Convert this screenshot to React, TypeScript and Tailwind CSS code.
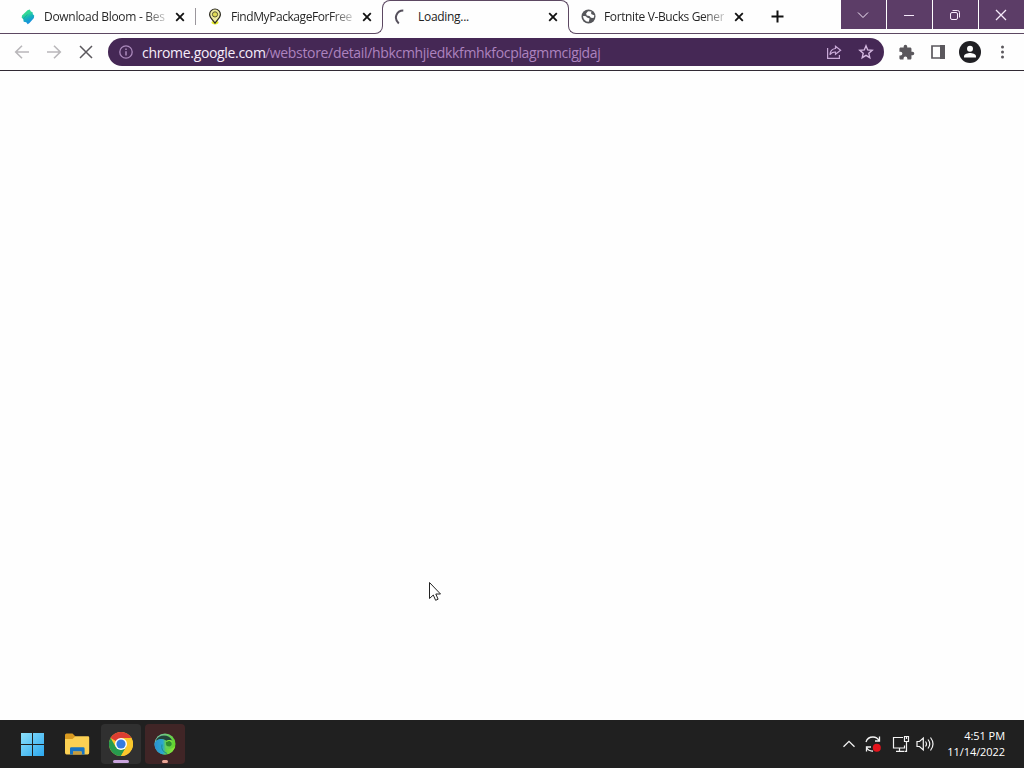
import type { ReactNode } from "react";

const UI_FONT = "font-['Open_Sans','Noto_Sans',sans-serif]";

function CloseIcon() {
  return (
    <svg width="10" height="10" viewBox="0 0 10 10" className="shrink-0" stroke="#111" strokeWidth="1.8" fill="none">
      <path d="M1.2 1.2 8.8 8.8M8.8 1.2 1.2 8.8" />
    </svg>
  );
}

function BloomIcon() {
  return (
    <svg width="14" height="16" viewBox="0 0 14 16">
      <defs>
        <linearGradient id="bloom" x1="0.1" y1="0" x2="0.5" y2="1">
          <stop offset="0.35" stopColor="#32d896" />
          <stop offset="0.6" stopColor="#16b4b8" />
          <stop offset="0.9" stopColor="#1792dc" />
        </linearGradient>
      </defs>
      <path d="M6.5 1.3 8.7.5 9.9 2.5 11.6 3.2 11.8 5.3 13.2 6.5 12.9 8.9 8.5 14 6.7 15.2 5.2 13.2 2.7 12.7 2.2 10 .7 8.7 1 6.5z" fill="url(#bloom)" />
      <path d="M2.2 10 6.5 5.5" stroke="#0f9c9c" strokeWidth="0.5" />
    </svg>
  );
}

function PinIcon() {
  return (
    <svg width="14" height="18" viewBox="0 0 14 18" fill="none">
      <ellipse cx="7" cy="14.6" rx="3.5" ry="1.8" fill="#e8ee2c" />
      <path d="M7 15.2C4.8 11.8 1.6 9.7 1.6 6.4a5.4 5.4 0 0 1 10.8 0c0 3.300-3.200 5.400-5.400 8.800z" fill="#eeeca0" stroke="#2b2a22" strokeWidth="1.2" />
      <circle cx="7" cy="6.4" r="2.6" fill="#e0dc53" stroke="#5b5838" strokeWidth="1" />
    </svg>
  );
}

function GlobeIcon() {
  return (
    <svg width="15" height="15" viewBox="0 0 15 15">
      <circle cx="7.5" cy="7.5" r="7" fill="#55565a" />
      <path d="M7 2.300 10.500 2.600Q9.500 4.300 10.500 5.300L13.300 6.200Q13.200 8.200 12.400 9L9.900 8.700 8.500 6.900 5.700 6.600 5.100 4.600zM1.900 7.200Q5 6.800 6 8.400L8.600 9.500 7.800 12.800Q3 12.500 1.900 7.200z" fill="#fff" />
    </svg>
  );
}

function Spinner() {
  return (
    <svg width="16" height="16" viewBox="0 0 16 16" fill="none" stroke="#55505c" strokeWidth="2">
      <path d="M9.3 1.5C2.500 1.500-.8 9.500 4.800 14.500" />
    </svg>
  );
}

type TabProps = {
  icon: ReactNode;
  title: string;
  className?: string;
  titleClass: string;
  closeClass?: string;
};

function Tab({ icon, title, className = "", titleClass, closeClass = "ml-2" }: TabProps) {
  return (
    <div className={`flex h-[33px] shrink-0 items-center ${className}`}>
      <span className="flex w-4 shrink-0 justify-center">{icon}</span>
      <span className="ml-2 w-[122px] shrink-0 pt-px text-[12px] leading-[18px] whitespace-nowrap text-[#222]">
        <span className={`inline-block ${titleClass}`}>{title}</span>
      </span>
      <span className={`flex ${closeClass}`}><CloseIcon /></span>
    </div>
  );
}

function CaptionButton({ children, label }: { children: ReactNode; label: string }) {
  return (
    <button aria-label={label} className="flex h-[29px] w-[45px] items-center justify-center bg-[#5c3d67] pr-[2px]">
      <svg width="14" height="14" viewBox="0 0 14 14" fill="none" stroke="#f6eafa" strokeWidth="1">
        {children}
      </svg>
    </button>
  );
}

function TabStrip() {
  const fade = "bg-linear-to-r from-[#222] from-82% to-[#c8c8c8] bg-clip-text text-transparent";
  return (
    <div className="flex h-[34px]">
      <div className="flex h-[34px] w-[374px] shrink-0 border-b border-[#5c4862]">
        <Tab className="ml-5" icon={<BloomIcon />} title="Download Bloom - Bes" titleClass={`tracking-[-0.3px] ${fade}`} closeClass="ml-[9px]" />
        <div className="mt-2 ml-[10px] h-[17px] w-px bg-[#9a969c]" />
        <Tab className="ml-[11px]" icon={<PinIcon />} title="FindMyPackageForFree" titleClass={`tracking-[-0.43px] ${fade}`} closeClass="ml-[9px]" />
      </div>
      <div className="h-[9px] w-[9px] shrink-0 self-end rounded-br-lg border-r border-b border-[#5c4862]" />
      <div className="-mx-px h-[34px] w-[187px] shrink-0">
        <div className="h-[26px] rounded-t-lg border-x border-t border-[#5c4862]">
          <Tab className="-mt-px ml-[11px]" icon={<Spinner />} title="Loading..." titleClass="tracking-[-0.3px]" />
        </div>
      </div>
      <div className="h-[9px] w-[9px] shrink-0 self-end rounded-bl-lg border-b border-l border-[#5c4862]" />
      <div className="flex h-[34px] grow border-b border-[#5c4862]">
        <Tab className="ml-[3px]" icon={<GlobeIcon />} title="Fortnite V-Bucks Gener" titleClass={`tracking-[-0.38px] ${fade}`} />
        <button aria-label="New tab" className="ml-[27px] flex h-[33px] items-center">
          <svg width="13" height="13" viewBox="0 0 13 13" stroke="#111" strokeWidth="2">
            <path d="M6.500.5v12M.5 6.500h12" />
          </svg>
        </button>
        <div className="ml-auto flex gap-px">
          <CaptionButton label="Search tabs"><path d="m2 4.500 5 5 5-5" /></CaptionButton>
          <CaptionButton label="Minimize"><path d="M2 7.500h10" /></CaptionButton>
          <CaptionButton label="Restore">
            <rect x="2.5" y="4.5" width="7" height="7" rx="1.5" />
            <path d="M4.500 2.500H9.500Q11.500 2.500 11.500 4.500V9.500" />
          </CaptionButton>
          <CaptionButton label="Close"><path d="m2 2 10 10M12 2 2 12" strokeWidth="1.3" /></CaptionButton>
        </div>
      </div>
    </div>
  );
}

function Toolbar() {
  return (
    <div className="flex h-[37px] items-center border-b border-[#312a34]">
      <div className="flex w-[108px] shrink-0 gap-4 pl-[14px]">
        <svg width="16" height="16" viewBox="0 0 16 16" fill="none" stroke="#b9b7ba" strokeWidth="1.6">
          <path d="M15 8H2M8 1.700 1.700 8 8 14.300" />
        </svg>
        <svg width="16" height="16" viewBox="0 0 16 16" fill="none" stroke="#b9b7ba" strokeWidth="1.6">
          <path d="M1 8h13M8 1.700 14.300 8 8 14.300" />
        </svg>
        <svg width="16" height="16" viewBox="0 0 16 16" fill="none" stroke="#5b585d" strokeWidth="1.5">
          <path d="m2 2 12 12M14 2 2 14" />
        </svg>
      </div>
      <div className="flex h-7 w-[776px] shrink-0 items-center rounded-full bg-[#452855] pr-[10px] pl-[11px]">
        <svg width="14" height="14" viewBox="0 0 14 14" fill="none" stroke="#ac8abd" strokeWidth="1.3">
          <circle cx="7" cy="7" r="6.2" />
          <path d="M7 6.200V10.500M7 3.500V5" strokeWidth="1.5" />
        </svg>
        <span className="ml-[9px] pt-px text-[14px] leading-5 whitespace-nowrap text-[#ad83bf]">
          <span className="inline-block w-[123px] tracking-[-0.33px] text-[#f6ecfa]">chrome.google.com</span>
          <span className="tracking-[-0.33px]">/webstore/detail/hbkcmhjiedkkfmhkfocplagmmcigjdaj</span>
        </span>
        <svg className="ml-auto" width="16" height="16" viewBox="0 0 16 16" fill="none" stroke="#c9a9d8" strokeWidth="1.2">
          <path d="M1.600 4v10.400h11.800V11" />
          <path d="M9.500 2.300 14.600 6.200 9.500 10.200V8Q5.700 7.800 3.900 10.800 4.300 5 9.500 4.500z" />
        </svg>
        <svg className="ml-4" width="16" height="16" viewBox="0 0 16 16" fill="none" stroke="#d5b9e1" strokeWidth="1.4">
          <path d="m8 1.800 1.700 4.100 4.500.4-3.400 3 1 4.400L8 11.400l-3.800 2.300 1-4.400-3.400-3 4.500-.4z" />
        </svg>
      </div>
      <svg className="ml-[14px] shrink-0" width="17" height="17" viewBox="0 0 24 24" fill="#5b585d">
        <path d="M20.500 11H19V7c0-1.100-.9-2-2-2h-4V3.500a2.500 2.500 0 0 0-5 0V5H4c-1.100 0-2 .9-2 2v3.800h1.500a2.700 2.700 0 0 1 0 5.400H2V20c0 1.100.9 2 2 2h3.800v-1.500a2.700 2.700 0 0 1 5.400 0V22H17c1.100 0 2-.9 2-2v-4h1.500a2.500 2.500 0 0 0 0-5z" />
      </svg>
      <svg className="ml-4 shrink-0" width="14" height="14" viewBox="0 0 14 14">
        <path d="M1 1h12v12H1z" fill="none" stroke="#5b585d" strokeWidth="1.7" />
        <path d="M9 0h5v14H9z" fill="#5b585d" />
      </svg>
      <svg className="ml-[14px] shrink-0" width="22" height="22" viewBox="0 0 22 22">
        <circle cx="11" cy="11" r="11" fill="#202024" />
        <circle cx="11" cy="7.8" r="3" fill="#fff" />
        <path d="M5 16.500v-1.300c0-2 4-3.200 6-3.200s6 1.200 6 3.200v1.300z" fill="#fff" />
      </svg>
      <svg className="ml-[19px] shrink-0" width="5" height="14" viewBox="0 0 5 14" fill="#5b585d">
        <circle cx="2.5" cy="2" r="1.5" />
        <circle cx="2.5" cy="7" r="1.5" />
        <circle cx="2.5" cy="12" r="1.5" />
      </svg>
    </div>
  );
}

function Cursor() {
  return (
    <svg className="absolute top-[581px] left-[428px]" width="14" height="21" viewBox="0 0 14 21">
      <path d="M1.500 1.500v16l3.800-3.500 2.300 5.300 2.500-1.100-2.300-5.200h4.700z" fill="#fff" stroke="#222" strokeWidth="1" />
    </svg>
  );
}

function FolderIcon() {
  return (
    <svg width="26" height="24" viewBox="0 0 26 24">
      <path d="M1 3Q1 1.500 2.500 1.500H8.500L11.500 4.500V10H1z" fill="#d99a20" />
      <path d="M1 7h7.500l3-2.800H24q1.200 0 1.200 1.300v15q0 2-1.500 2H2.500Q1 22.500 1 20.500z" fill="#fbd053" />
      <path d="M6 22.500v-6q0-1.300 1.300-1.300h12q1.300 0 1.300 1.300v6h-3v-3H9v3z" fill="#1773c2" />
      <path d="M9 19.500h8.600v3H9z" fill="#c79b3c" />
    </svg>
  );
}

function ChromeIcon() {
  return (
    <svg width="24" height="24" viewBox="0 0 24 24">
      <circle cx="12" cy="12" r="12" fill="#fac72c" />
      <path d="M12 12 1.600 6A12 12 0 0 1 22.400 6H12z" fill="#dd3e32" />
      <path d="M1.600 6A12 12 0 0 0 12 24L17.200 15 12 12 6.800 15z" fill="#279b4e" />
      <path d="M12 6h10.400A12 12 0 0 1 12 24l5.200-9z" fill="#fac72c" />
      <circle cx="12" cy="12" r="6" fill="#fff" />
      <circle cx="12" cy="12" r="4.6" fill="#347be0" />
    </svg>
  );
}

function SwirlIcon() {
  return (
    <svg width="22" height="22" viewBox="0 0 22 22">
      <defs>
        <linearGradient id="swirl" x1="0" y1="0" x2="1" y2="0.3">
          <stop offset="0" stopColor="#7cc9b4" />
          <stop offset="0.5" stopColor="#6cc878" />
          <stop offset="1" stopColor="#62d62c" />
        </linearGradient>
        <linearGradient id="swirl-wave" x1="0" y1="0" x2="1" y2="0">
          <stop offset="0" stopColor="#2b8fd0" />
          <stop offset="0.4" stopColor="#2ba9cf" />
          <stop offset="0.55" stopColor="#63cf4a" />
          <stop offset="1" stopColor="#92ea35" />
        </linearGradient>
      </defs>
      <circle cx="11" cy="11" r="10.5" fill="url(#swirl)" />
      <path d="M1.500 8C5 .8 15 .8 18.500 8Q16 6 13 8 8 4.500 1.500 8z" fill="#23443a" />
      <path d="M.5 11C1.500 5.500 9.500 4.500 12 8.500 13 11.500 10 13 12 15.300 15 17 19 15.500 21.300 13 19.500 19.500 14.500 22 9.500 21.400 4 20.800.3 16 .5 11z" fill="url(#swirl-wave)" />
      <path d="M8 11.500Q6.500 18 13 20.500" fill="none" stroke="#1d8a8c" strokeWidth="1" />
      <path d="M12 9Q14.500 6.500 17 9 19 12 15.500 13.500 12 13.500 12 11z" fill="#2f8e31" />
      <path d="M12.500 8.500Q15 6.500 18 8.500" fill="none" stroke="#84e83a" strokeWidth="1.2" />
    </svg>
  );
}

function Taskbar() {
  return (
    <div className="flex h-12 shrink-0 bg-[#202020] text-white">
      <div className="flex items-center pl-[21px]">
        <svg width="23" height="23" viewBox="0 0 23 23">
          <defs>
            <linearGradient id="win" x1="0" y1="0" x2="1" y2="1">
              <stop offset="0" stopColor="#8ce0fb" />
              <stop offset="1" stopColor="#2ba7ee" />
            </linearGradient>
          </defs>
          <path d="M0 0h11v11H0zM12 0h11v11H12zM0 12h11v11H0zM12 12h11v11H12z" fill="url(#win)" />
        </svg>
        <div className="ml-5 flex"><FolderIcon /></div>
        <div className="ml-[11px] flex h-10 w-10 flex-col items-center rounded bg-[#303030] pt-2">
          <ChromeIcon />
          <div className="mt-[4px] h-[3px] w-4 shrink-0 rounded-full bg-[#c9a4dd]" />
        </div>
        <div className="ml-1 flex h-10 w-10 flex-col items-center rounded bg-[#402526] pt-[9px]">
          <SwirlIcon />
          <div className="mt-[5px] h-[3px] w-[6px] shrink-0 rounded-full bg-[#e8a596]" />
        </div>
      </div>
      <div className="ml-auto flex items-center pr-[19px]">
        <svg width="14" height="8" viewBox="0 0 14 8" fill="none" stroke="#f3f3f3" strokeWidth="1.3">
          <path d="m1.500 6.800 5.500-5.500 5.500 5.500" />
        </svg>
        <svg className="ml-[8px]" width="18" height="18" viewBox="0 0 18 18" fill="none" stroke="#f3f3f3" strokeWidth="1.3">
          <path d="M2 7Q3.500 2 9 2q4 0 6 3.500M15.500 1.500V6H11M2.500 16.500V12H7M2.500 12.500Q5 16.500 9 16" />
          <circle cx="12.8" cy="12.8" r="4" fill="#e5141c" stroke="none" />
        </svg>
        <svg className="ml-[10px]" width="18" height="18" viewBox="0 0 18 18" fill="none" stroke="#f3f3f3" strokeWidth="1.2">
          <path d="M11 2.500H1.500V13H12.500V10.500M7.500 13v3M4 16.400h8M12.500 1.500h4v5h-4zM14.500 6.500v9.800H12.500M14.500 1.500v2.500" />
        </svg>
        <svg className="ml-[6px]" width="18" height="16" viewBox="0 0 18 16" fill="none" stroke="#f3f3f3" strokeWidth="1.2">
          <path d="M1 5.500H3.500L7.300 2v12L3.500 10.500H1zM9.500 5.500q2 2.500 0 5M12 3.500q3.500 4.500 0 9M14.500 1.500q5 6.500 0 13" />
        </svg>
        <div className="ml-[11px] flex w-[60px] flex-col items-end text-[11px] leading-4 whitespace-nowrap">
          <span className="tracking-[-0.05px]">4:51 PM</span>
          <span className="tracking-[-0.07px]">11/14/2022</span>
        </div>
      </div>
    </div>
  );
}

export default function App() {
  return (
    <div className={`relative flex h-[768px] w-[1024px] flex-col overflow-hidden bg-[#fefefe] ${UI_FONT}`}>
      <TabStrip />
      <Toolbar />
      <main className="grow bg-[#fefefe]" />
      <Taskbar />
      <Cursor />
    </div>
  );
}
